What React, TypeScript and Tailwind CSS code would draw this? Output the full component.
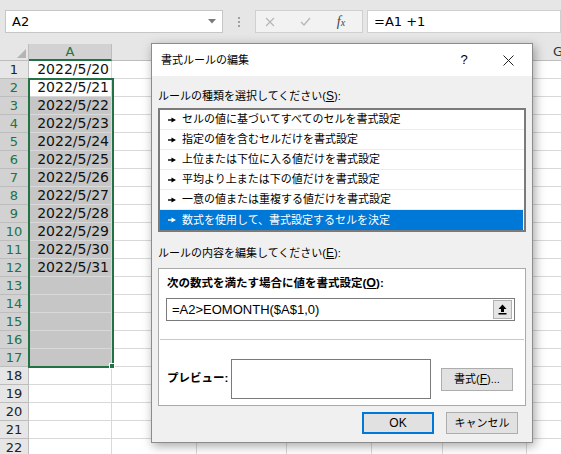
import React from 'react';

const dates = [
  '2022/5/20', '2022/5/21', '2022/5/22', '2022/5/23', '2022/5/24', '2022/5/25',
  '2022/5/26', '2022/5/27', '2022/5/28', '2022/5/29', '2022/5/30', '2022/5/31',
];

const otherCols = [85, 90, 85, 71, 84];

const rules = [
  'セルの値に基づいてすべてのセルを書式設定',
  '指定の値を含むセルだけを書式設定',
  '上位または下位に入る値だけを書式設定',
  '平均より上または下の値だけを書式設定',
  '一意の値または重複する値だけを書式設定',
  '数式を使用して、書式設定するセルを決定',
];

function ListArrow() {
  return (
    <svg width="8" height="6" viewBox="0 0 8 6" className="shrink-0">
      <path d="M0 3h4.5" stroke="currentColor" strokeWidth="1.4" />
      <path d="M3.5 0.6L8 3L3.5 5.4Z" fill="currentColor" />
    </svg>
  );
}

function FormulaBar() {
  return (
    <div className="flex h-[44px] bg-[#e6e6e6] pl-[5px] pt-[10px]">
      <div className="flex h-[23px] w-[218px] items-center border border-[#c6c6c6] bg-white pl-[6px] pr-[6px]">
        <span className="flex-1 text-[13px] text-black">A2</span>
        <svg width="8" height="5" viewBox="0 0 8 5">
          <path d="M0 0h8L4 4.5Z" fill="#7a7a7a" />
        </svg>
      </div>
      <div className="flex h-[23px] w-[32px] flex-col items-center justify-center gap-[2px]">
        <span className="h-[2px] w-[2px] bg-[#a0a0a0]" />
        <span className="h-[2px] w-[2px] bg-[#a0a0a0]" />
        <span className="h-[2px] w-[2px] bg-[#a0a0a0]" />
      </div>
      <div className="flex h-[23px] w-[108px] items-center border border-[#d0d0d0] bg-[#f2f2f2]">
        <div className="flex w-[28px] justify-center">
          <svg width="10" height="10" viewBox="0 0 10 10">
            <path d="M1 1L9 9M9 1L1 9" stroke="#b5b5b5" strokeWidth="1.1" />
          </svg>
        </div>
        <div className="flex w-[42px] justify-center">
          <svg width="11" height="9" viewBox="0 0 11 9">
            <path d="M1 5L4 8L10 1" stroke="#b5b5b5" strokeWidth="1.2" fill="none" />
          </svg>
        </div>
        <div className="flex w-[30px] items-baseline justify-center font-['Liberation_Serif',serif] text-[14px] italic leading-none text-[#444]">
          <span>f</span>
          <span className="text-[10px]">x</span>
        </div>
      </div>
      <div className="ml-[4px] flex h-[23px] flex-1 items-center border border-[#d0d0d0] bg-white pl-[6px] text-[13px] text-black">
        =A1 +1
      </div>
    </div>
  );
}

function HeaderRow() {
  return (
    <div className="flex h-[17px] bg-[#e6e6e6]">
      <div className="relative w-[29px] shrink-0 border-r border-b border-[#bdbdbd]">
        <svg width="9" height="9" viewBox="0 0 9 9" className="absolute bottom-[2px] right-[2px]">
          <path d="M9 0V9H0Z" fill="#b4b4b4" />
        </svg>
      </div>
      <div className="flex w-[83px] shrink-0 items-center justify-center border-r border-b-2 border-r-[#bdbdbd] border-b-[#217346] bg-[#d2d2d2] text-[13px] text-[#217346]">
        A
      </div>
      {otherCols.map((w, i) => (
        <div key={i} style={{ width: w }} className="shrink-0 border-r border-b border-[#bdbdbd]" />
      ))}
      <div className="flex w-[62px] shrink-0 items-center justify-center border-b border-[#bdbdbd] text-[13px] text-[#333]">
        G
      </div>
    </div>
  );
}

function Row({ n }: { n: number }) {
  const sel = n >= 2 && n <= 17;
  const shaded = n >= 3 && n <= 17;
  const text = n <= 12 ? dates[n - 1] : '';
  return (
    <div className="flex h-[18px]">
      <div
        className={`flex w-[29px] shrink-0 items-center justify-center border-r border-b border-[#bdbdbd] text-[13px] ${
          sel ? 'bg-[#d2d2d2] text-[#217346]' : 'bg-[#e6e6e6] text-[#222]'
        }`}
      >
        {n}
      </div>
      <div
        className={`flex w-[83px] shrink-0 items-center justify-end border-r border-b border-[#d9d9d9] pr-[2px] text-[14px] text-[#111] ${
          shaded ? 'bg-[#c6c6c6]' : 'bg-white'
        }`}
      >
        {text}
      </div>
      {otherCols.map((w, i) => (
        <div key={i} style={{ width: w }} className="shrink-0 border-r border-b border-[#d9d9d9]" />
      ))}
      <div className="w-[62px] shrink-0 border-b border-[#d9d9d9]" />
    </div>
  );
}

function Dialog() {
  return (
    <div className="absolute left-[151px] top-[43px] flex h-[400px] w-[382px] flex-col border border-[#8c8c8c] bg-[#f0f0f0] font-['Liberation_Sans','Noto_Sans_CJK_JP',sans-serif] text-[11px] text-black shadow-[2px_3px_10px_rgba(0,0,0,0.35)]">
      <div className="flex h-[32px] shrink-0 items-center bg-white pl-[9px] pr-[3px]">
        <span className="flex-1">書式ルールの編集</span>
        <span className="w-[46px] text-center text-[13px]">?</span>
        <div className="flex w-[42px] justify-center">
          <svg width="11" height="11" viewBox="0 0 11 11">
            <path d="M0.5 0.5L10.5 10.5M10.5 0.5L0.5 10.5" stroke="#222" strokeWidth="1" />
          </svg>
        </div>
      </div>

      <div className="flex flex-1 flex-col px-[6px]">
        <div className="mt-[12px] h-[16px] leading-[16px]">
          ルールの種類を選択してください(<span className="text-[12px] underline">S</span>):
        </div>

        <div className="mt-[4px] h-[124px] border-2 border-[#7a7a7a] bg-white">
          {rules.map((r, i) => {
            const active = i === rules.length - 1;
            return (
              <div
                key={r}
                className={`flex h-[20px] items-center gap-[6px] pl-[8px] ${
                  active ? 'mr-[1px] bg-[#0078d7] text-white' : 'border-b border-[#ececec]'
                }`}
              >
                <ListArrow />
                <span>{r}</span>
              </div>
            );
          })}
        </div>

        <div className="mt-[13px] h-[16px] leading-[16px]">
          ルールの内容を編集してください(<span className="text-[12px] underline">E</span>):
        </div>

        <div className="mt-[7px] flex h-[138px] flex-col border border-[#a9a9a9] bg-white px-[7px]">
          <div className="mt-[6px] h-[16px] pl-[1px] text-[11.5px] font-bold leading-[16px]">
            次の数式を満たす場合に値を書式設定(<span className="text-[12.5px] underline">O</span>):
          </div>
          <div className="mt-[7px] flex h-[23px] w-[349px] items-center border border-[#7a7a7a] bg-white pl-[5px] pr-[2px]">
            <span className="flex-1 text-[13px]">=A2&gt;EOMONTH($A$1,0)</span>
            <div className="flex h-[19px] w-[19px] items-center justify-center border border-[#b0b0b0] bg-[#e5e5e5]">
              <svg width="9" height="11" viewBox="0 0 9 11">
                <path d="M4.5 0.5L8.5 5H6V8H3V5H0.5Z" fill="#000" />
                <rect x="0.5" y="9" width="8" height="1.5" fill="#000" />
              </svg>
            </div>
          </div>
          <div className="mx-[-6px] mt-[18px] h-px bg-[#c8c8c8]" />
          <div className="mt-[19px] flex h-[40px] items-center">
            <span className="w-[65px] pl-[1px] text-[11.5px] font-bold">プレビュー:</span>
            <div className="h-[40px] w-[200px] border border-[#7a7a7a] bg-white" />
            <div className="ml-[10px] flex h-[23px] w-[72px] items-center justify-center border border-[#adadad] bg-[#e1e1e1]">
              書式(<span className="text-[12px] underline">F</span>)...
            </div>
          </div>
        </div>

        <div className="mt-[6px] flex justify-end gap-[12px] pr-[8px]">
          <div className="flex h-[22px] w-[72px] items-center justify-center border-2 border-[#0078d7] bg-[#e1e1e1] text-[12px]">
            OK
          </div>
          <div className="flex h-[22px] w-[72px] items-center justify-center border border-[#adadad] bg-[#e1e1e1]">
            キャンセル
          </div>
        </div>
      </div>
    </div>
  );
}

export default function App() {
  const rows = Array.from({ length: 22 }, (_, i) => i + 1);
  return (
    <div className="relative h-[454px] w-[561px] overflow-hidden bg-white font-['DejaVu_Sans','Noto_Sans_CJK_JP',sans-serif]">
      <FormulaBar />
      <HeaderRow />
      <div className="relative">
        {rows.map((n) => (
          <Row key={n} n={n} />
        ))}
        {/* selection A2:A17 */}
        <div className="pointer-events-none absolute left-[28px] top-[17px] h-[290px] w-[86px] border-2 border-[#217346]" />
        <div className="absolute left-[109px] top-[302px] h-[6px] w-[6px] border border-white bg-[#217346]" />
      </div>
      <Dialog />
    </div>
  );
}
